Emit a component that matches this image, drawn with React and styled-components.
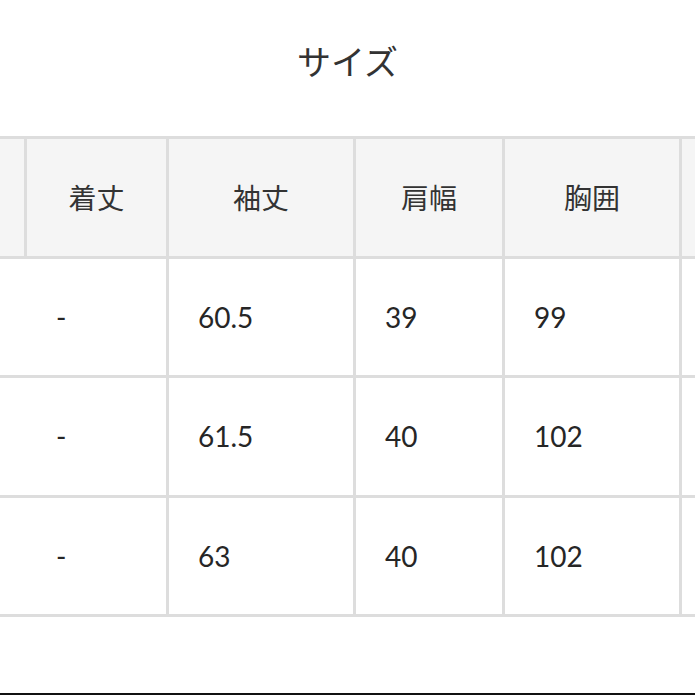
import React from 'react';
import styled, { createGlobalStyle } from 'styled-components';

const GlobalStyle = createGlobalStyle`
  html, body {
    margin: 0;
    padding: 0;
    background: #ffffff;
  }
  body {
    font-family: Lato, "Noto Sans CJK JP", sans-serif;
    color: #333333;
  }
`;

const Page = styled.div`
  width: 695px;
  height: 695px;
  display: flex;
  flex-direction: column;
  overflow: hidden;
  background: #ffffff;
`;

const Title = styled.h2`
  margin: 0;
  padding-top: 42px;
  height: 136px;
  flex-shrink: 0;
  box-sizing: border-box;
  text-align: center;
  font-family: "Noto Sans CJK JP", sans-serif;
  font-weight: 400;
  font-size: 34px;
  line-height: 38px;
  color: #333333;
`;

const TableClip = styled.div`
  width: 695px;
  overflow: hidden;
  flex-shrink: 0;
`;

const SizeGrid = styled.div`
  display: grid;
  grid-template-columns: 24px 139px 184px 146px 174px 40px;
  grid-auto-rows: 116.5px;
  gap: 3px;
  padding: 3px 0;
  width: max-content;
  background: #dddddd;
`;

const Cell = styled.div`
  display: flex;
  align-items: center;
  justify-content: ${(p) => (p.$head ? 'center' : 'flex-start')};
  padding-left: ${(p) => (p.$head ? '0' : '29px')};
  background: ${(p) => (p.$head ? '#f5f5f5' : '#ffffff')};
  font-family: ${(p) => (p.$head ? '"Noto Sans CJK JP", sans-serif' : 'Lato, "Noto Sans CJK JP", sans-serif')};
  font-size: 28px;
  color: ${(p) => (p.$head ? '#333333' : '#262626')};
  white-space: nowrap;
  overflow: hidden;
`;

const BottomRule = styled.div`
  margin-top: auto;
  height: 2px;
  flex-shrink: 0;
  background: #111111;
`;

const headers = ['', '着丈', '袖丈', '肩幅', '胸囲', ''];
const rows = [
  ['', '-', '60.5', '39', '99', ''],
  ['', '-', '61.5', '40', '102', ''],
  ['', '-', '63', '40', '102', ''],
];

const App = () => {
  return (
    <Page>
      <GlobalStyle />
      <Title>サイズ</Title>
      <TableClip>
        <SizeGrid>
          {headers.map((h, i) => (
            <Cell $head key={'h' + i}>{h}</Cell>
          ))}
          {rows.map((row, r) =>
            row.map((v, i) => <Cell key={r + '-' + i}>{v}</Cell>)
          )}
        </SizeGrid>
      </TableClip>
      <BottomRule />
    </Page>
  );
};

export default App;
